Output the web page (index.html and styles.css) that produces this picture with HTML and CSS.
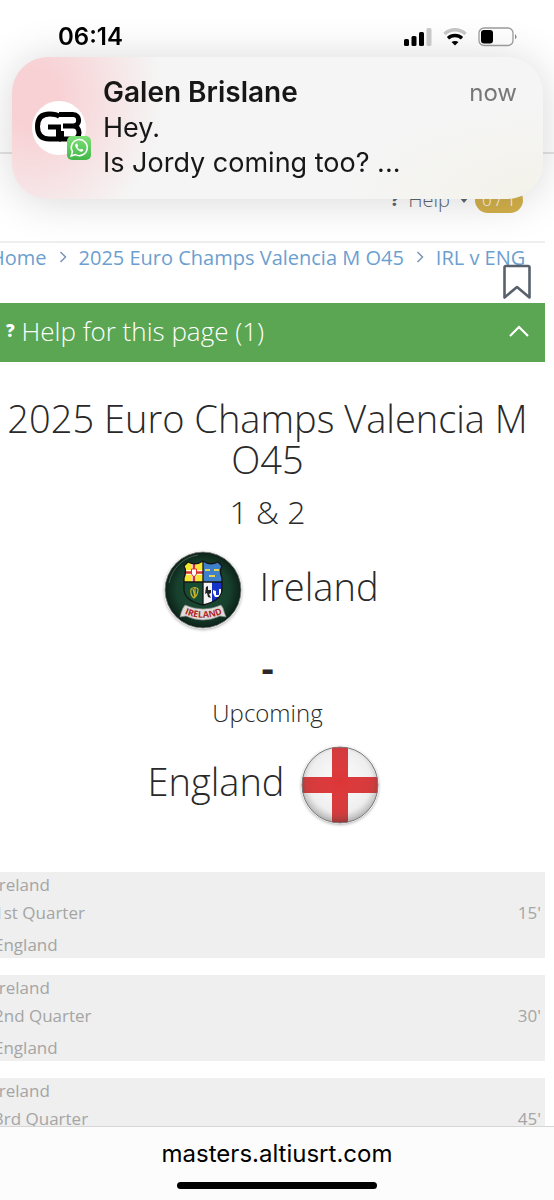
FILE: index.html
```html
<!DOCTYPE html>
<html lang="en">
<head>
  <meta charset="UTF-8" />
  <meta name="viewport" content="width=device-width, initial-scale=1.0">
  <title>IRL v ENG - 2025 Euro Champs Valencia M O45</title>
  <link rel="stylesheet" href="styles.css">
</head>
<body>
  <!-- Phone status bar -->
  <div class="status-bar">
    <div class="status-time">06:14</div>
    <div class="status-icons">
      <svg width="28" height="18" viewBox="0 0 28 18">
        <rect x="0" y="11" width="5" height="7" rx="1.5"/>
        <rect x="7.5" y="8" width="5" height="10" rx="1.5"/>
        <rect x="15" y="4" width="5" height="14" rx="1.5"/>
        <rect x="22.5" y="0" width="5" height="18" rx="1.5" fill="#c8c8c8"/>
      </svg>
      <svg width="24" height="18" viewBox="0 0 24 18" fill="none" stroke-width="3.4">
        <path d="M1.5 6C7.5 .4 16.500 .4 22.500 6" stroke="#c4c4c4"/>
        <path d="M5 10.200C9 6.500 15 6.500 19 10.200" stroke="#000"/>
        <path d="M8.500 14C10.500 12.500 13.500 12.500 15.500 14L12 17.500Z" fill="#000"/>
      </svg>
      <svg width="39" height="20" viewBox="0 0 39 20">
        <rect x="1" y="1" width="34" height="17.500" rx="5" fill="none" stroke="#999" stroke-width="1.300"/>
        <rect x="3" y="3" width="12" height="13.500" rx="3"/>
        <path d="M37 7.500c2 .6 2 4 0 4.600z" fill="#888"/>
      </svg>
    </div>
  </div>

  <!-- Message notification -->
  <div class="notification">
    <div class="avatar">
      <svg class="avatar-logo" width="54" height="54" viewBox="0 0 54 54">
        <circle cx="27" cy="27" r="27" fill="#fff"/>
        <g fill="none" stroke="#000" stroke-width="5">
          <path d="M27.500 15.500C25 13.500 22 13 17.500 13C9 13 5.500 18 5.500 25.500C5.500 33 9 38 17.500 38H26.500V26H16"/>
          <path d="M27 13.500H41C48.500 13.500 48.500 25 41 25H31M41 25C49 25 49 38 41 38H29.500V30"/>
        </g>
      </svg>
      <svg class="avatar-app" width="24" height="24" viewBox="0 0 24 24">
        <defs>
          <linearGradient id="appGreen" x1="0" y1="0" x2="0" y2="1">
            <stop offset="0" stop-color="#7fe077"/>
            <stop offset="1" stop-color="#43b649"/>
          </linearGradient>
        </defs>
        <rect width="24" height="24" rx="5" fill="url(#appGreen)"/>
        <path d="M4.200 20l1.200-4.300a8 8 0 1 1 3 2.900z" fill="none" stroke="#fff" stroke-width="1.500"/>
        <path d="M9.200 7.500c-1.800 1-1 3.400.8 5.600s4.600 3.600 6 1.700c.7-1 .3-1.300-1.500-2.100-.7-.3-1 .9-1.500.9-.9-.2-2.500-1.700-2.600-2.500 0-.4.9-.8.7-1.400-.6-1.600-.9-2.500-1.900-2.200z" fill="#fff"/>
      </svg>
    </div>
    <div class="notification-body">
      <div class="notification-top">
        <div class="notification-name">Galen Brislane</div>
        <div class="notification-when">now</div>
      </div>
      <p>Hey.</p>
      <p>Is Jordy coming too? ...</p>
    </div>
  </div>

  <!-- Site header, mostly behind the notification -->
  <div class="site-header"></div>
  <div class="page">
    <div class="help-nav">
      <button class="help-button"><span class="mark">?</span>Help
        <svg width="10" height="6" viewBox="0 0 10 6"><path d="M0 0h10L5 6z" fill="#5d6670"/></svg>
      </button>
      <span class="badge">0 / 1</span>
    </div>

    <nav class="breadcrumb">
      <a href="#">Home</a>
      <svg width="8" height="12" viewBox="0 0 8 12"><path d="M1.500 1L6.500 6L1.500 11"/></svg>
      <a href="#">2025 Euro Champs Valencia M O45</a>
      <svg width="8" height="12" viewBox="0 0 8 12"><path d="M1.500 1L6.500 6L1.500 11"/></svg>
      <a href="#">IRL v ENG</a>
      <button class="bookmark" aria-label="Bookmark">
        <svg width="30" height="36" viewBox="0 0 30 36">
          <path d="M2.500 3.500Q2.500 2 4 2H26Q27.500 2 27.500 3.500V33.500L15 23L2.500 33.500Z" fill="none" stroke="#59616d" stroke-width="2.600" stroke-linejoin="round"/>
        </svg>
      </button>
    </nav>

    <button class="help-panel">
      <span class="mark">?</span>
      <span class="help-title">Help for this page (1)</span>
      <svg width="20" height="12" viewBox="0 0 20 12"><path d="M1 11L10 2L19 11" fill="none" stroke="#fff" stroke-width="2.200"/></svg>
    </button>

    <!-- Match summary -->
    <div class="match">
      <h1>2025 Euro Champs Valencia M O45</h1>
      <h2>1 &amp; 2</h2>
      <div class="team home">
        <svg width="78" height="78" viewBox="0 0 78 78">
          <defs>
            <radialGradient id="irlBall" cx=".5" cy=".5" r=".5">
              <stop offset="0" stop-color="#1c5138"/>
              <stop offset=".7" stop-color="#17402d"/>
              <stop offset="1" stop-color="#0c2118"/>
            </radialGradient>
            <clipPath id="shield">
              <path d="M20 15L24 11Q32 15 39 10Q46 15 54 11L58 15Q55 20 58 27V39Q57 50 39 54Q21 50 20 39V27Q23 20 20 15Z"/>
            </clipPath>
            <path id="scroll" d="M20 62.500Q39 71 59 62.500"/>
          </defs>
          <circle cx="39" cy="39" r="38" fill="url(#irlBall)" stroke="#777" stroke-width=".8"/>
          <path d="M5 32A35 35 0 0 1 34 4" fill="none" stroke="#6c8778" stroke-width="1" opacity=".6"/>
          <g clip-path="url(#shield)">
            <rect x="19" y="9" width="20" height="22" fill="#f5e630"/>
            <rect x="39" y="9" width="20" height="22" fill="#3f80cb"/>
            <rect x="19" y="31" width="20" height="24" fill="#174c34"/>
            <rect x="39" y="31" width="9" height="24" fill="#f4f4f4"/>
            <rect x="48" y="31" width="11" height="24" fill="#1732c9"/>
            <path d="M30 9V31M19 21.500H39" stroke="#fff" stroke-width="4.400"/>
            <path d="M30 9V31M19 21.500H39" stroke="#d8322c" stroke-width="2.600"/>
            <path d="M27.500 18h5v5l-2.500 3l-2.500-3z" fill="#fff" stroke="#d8322c"/>
            <path d="M41 18h5v2h-5zM50 18h5v2h-5zM45 24h6v2h-6z" fill="#e5d251"/>
            <path d="M27 38Q31 35 34 38Q34 44 30 47Q26 44 27 38M29 38L31 46M31 37V45" fill="none" stroke="#c8b52e" stroke-width="1.200"/>
            <path d="M42 36l2-1v4h3v3l-2 1 2 4-3-1-1-4-2 1z" fill="#222"/>
            <path d="M49 39l3 1v4h3v-6h2v8h-6l-2-4z" fill="#fff"/>
          </g>
          <path d="M20 15L24 11Q32 15 39 10Q46 15 54 11L58 15Q55 20 58 27V39Q57 50 39 54Q21 50 20 39V27Q23 20 20 15ZM39 10V54M20 31H58" fill="none" stroke="#151515" stroke-width="1.300"/>
          <path d="M21 54Q39 62 57 54L59 57Q60 61 62 66L56 65Q39 73 22 65L16 66Q17 61 19 57Z" fill="#deded9" stroke="#888" stroke-width=".7"/>
          <text class="crest-text"><textPath href="#scroll" startOffset="50%" text-anchor="middle">IRELAND</textPath></text>
        </svg>
        <span>Ireland</span>
      </div>
      <div class="score">-</div>
      <div class="state">Upcoming</div>
      <div class="team away">
        <span>England</span>
        <svg width="78" height="78" viewBox="0 0 78 78">
          <defs>
            <radialGradient id="engBall" cx=".5" cy=".45" r=".55">
              <stop offset="0" stop-color="#fff" stop-opacity="0"/>
              <stop offset=".75" stop-color="#777" stop-opacity=".08"/>
              <stop offset="1" stop-color="#333" stop-opacity=".4"/>
            </radialGradient>
            <clipPath id="ball"><circle cx="39" cy="39" r="38"/></clipPath>
          </defs>
          <g clip-path="url(#ball)">
            <rect width="78" height="78" fill="#f8f8f8"/>
            <path d="M31 0H47V31H78V47H47V78H31V47H0V31H31Z" fill="#dc3537"/>
          </g>
          <circle cx="39" cy="39" r="38" fill="url(#engBall)" stroke="#777" stroke-width="1"/>
        </svg>
      </div>
    </div>

    <!-- Quarters -->
    <div class="periods">
      <div class="period">
        <div>Ireland</div>
        <div class="period-name"><span>1st Quarter</span><span>15'</span></div>
        <div>England</div>
      </div>
      <div class="period">
        <div>Ireland</div>
        <div class="period-name"><span>2nd Quarter</span><span>30'</span></div>
        <div>England</div>
      </div>
      <div class="period">
        <div>Ireland</div>
        <div class="period-name"><span>3rd Quarter</span><span>45'</span></div>
        <div>England</div>
      </div>
    </div>
  </div>

  <!-- Browser address bar -->
  <div class="address-bar">
    <div class="address">masters.altiusrt.com</div>
    <div class="home-indicator"></div>
  </div>
</body>
</html>
```
FILE: styles.css
```css
* {
  margin: 0;
  padding: 0;
  box-sizing: border-box;
}
body {
  background-color: #fff;
  color: #292929;
  font-family: 'Open Sans', sans-serif;
  font-weight: 300;
  height: 100vh;
  overflow: hidden;
}
button {
  border: none;
  background: none;
  font: inherit;
  color: inherit;
  cursor: pointer;
}
svg {
  display: block;
  flex: none;
}
/* Status bar */
.status-bar {
  position: fixed;
  top: 0;
  left: 0;
  right: 0;
  z-index: 3;
  display: flex;
  justify-content: space-between;
  align-items: center;
  padding: 23px 37px 0 58px;
  font-family: 'Inter', sans-serif;
  color: #000;
}
.status-time {
  font-size: 24px;
  line-height: 28px;
  font-weight: 600;
}
.status-icons {
  display: flex;
  align-items: center;
  gap: 11px;
}
/* Notification */
.notification {
  position: fixed;
  top: 57px;
  left: 12px;
  right: 11px;
  z-index: 2;
  display: flex;
  align-items: center;
  gap: 17px;
  padding: 18px 26px 19px 20px;
  border-radius: 36px;
  background:
    radial-gradient(ellipse 130px 150px at 20px 40px, #f8d1d4 20%, rgba(248, 209, 212, 0)),
    radial-gradient(ellipse 200px 90px at 100% 100%, #f3f2e9, rgba(243, 242, 233, 0)),
    #f5f5f5;
  box-shadow: 0 2px 44px rgba(0, 0, 0, 0.16);
  font-family: 'Inter', sans-serif;
  font-weight: 400;
  color: #171717;
}
.avatar {
  position: relative;
  width: 54px;
  height: 54px;
}
.avatar-app {
  position: absolute;
  right: -5px;
  bottom: -5px;
}
.notification-body {
  flex: 1;
  font-size: 27px;
  line-height: 35px;
}
.notification-top {
  display: flex;
  justify-content: space-between;
}
.notification-name {
  font-size: 28px;
  font-weight: 600;
}
.notification-when {
  font-size: 24px;
  color: #777;
}
/* Page */
.site-header {
  height: 154px;
  border-bottom: 2px solid #e4e4e4;
}
.page {
  margin: 0 9px 0 -10px;
}
.help-nav {
  display: flex;
  justify-content: flex-end;
  align-items: center;
  gap: 6px;
  height: 89px;
  padding: 4px 22px 0 0;
  border-bottom: 2px solid #eee;
  font-size: 20px;
  line-height: 26px;
}
.help-button {
  display: flex;
  align-items: center;
  gap: 9px;
  color: #5d6670;
}
.mark {
  font-size: 17px;
  font-weight: 800;
}
.badge {
  padding: 0 7px;
  border-radius: 13px;
  background-color: #d3b04b;
  color: #fff;
  font-size: 17px;
}
.breadcrumb {
  position: relative;
  display: flex;
  align-items: center;
  gap: 12px;
  height: 60px;
  padding-bottom: 32px;
  font-size: 20px;
  white-space: nowrap;
}
.breadcrumb a {
  color: #6c9fd0;
  font-weight: 400;
  text-decoration: none;
}
.breadcrumb path {
  fill: none;
  stroke: #7796b3;
  stroke-width: 1.5;
}
.bookmark {
  position: absolute;
  right: 13px;
  bottom: 3px;
}
.breadcrumb .bookmark path {
  stroke: #59616d;
  stroke-width: 2.6;
}
.help-panel {
  display: flex;
  align-items: center;
  gap: 7px;
  width: 100%;
  height: 59px;
  padding: 0 16px 4px;
  background-color: #5aa653;
  color: #fff;
  text-align: left;
}
.help-title {
  flex: 1;
  font-size: 26px;
}
/* Match summary */
.match {
  padding: 36px 0 48px;
  text-align: center;
}
.match h1 {
  font-size: 38px;
  line-height: 41px;
  font-weight: 300;
}
.match h2 {
  margin: 10px 0 17px;
  font-size: 32px;
  line-height: 44px;
  font-weight: 300;
}
.team {
  display: flex;
  justify-content: center;
  align-items: center;
  gap: 17px;
  font-size: 38px;
}
.home {
  padding-left: 8px;
}
.away {
  padding-right: 8px;
}
.team span {
  line-height: 52px;
  padding-bottom: 8px;
}
.team svg {
  border-radius: 50%;
  box-shadow: 0 1px 3px rgba(0, 0, 0, 0.3);
}
.crest-text {
  fill: #b0262b;
  font-size: 9px;
  font-weight: 700;
}
.score {
  margin-top: 16px;
  font-size: 38px;
  line-height: 44px;
  font-weight: 700;
}
.state {
  margin: 8px 0 17px;
  font-size: 24px;
  line-height: 32px;
}
/* Quarters */
.periods {
  display: flex;
  flex-direction: column;
  gap: 17px;
}
.period {
  padding: 0 4px;
  background-color: #efefef;
  color: #a5a5a5;
  font-size: 17px;
  line-height: 26px;
  font-weight: 400;
}
.period-name {
  display: flex;
  justify-content: space-between;
  padding: 2px 0 6px;
}
/* Address bar */
.address-bar {
  position: fixed;
  left: 0;
  right: 0;
  bottom: 0;
  z-index: 2;
  display: flex;
  flex-direction: column;
  align-items: center;
  gap: 12px;
  padding: 11px 0 11px;
  background-color: #fcfcfc;
  border-top: 1px solid #d6d6d6;
  font-family: 'Inter', sans-serif;
  color: #000;
}
.address {
  font-size: 24px;
  line-height: 32px;
  font-weight: 400;
}
.home-indicator {
  width: 36%;
  height: 7px;
  border-radius: 4px;
  background-color: #000;
}
```
